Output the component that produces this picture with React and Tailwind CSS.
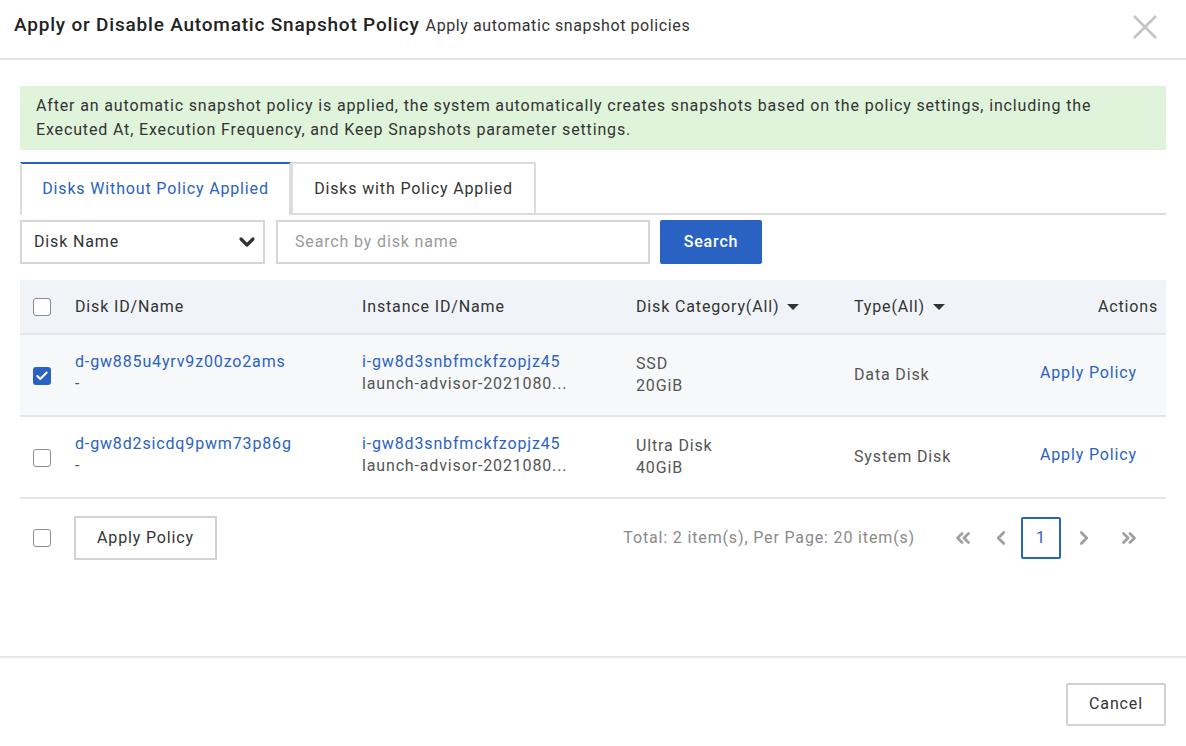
import { Check, ChevronDown, ChevronLeft, ChevronRight, ChevronsLeft, ChevronsRight } from 'lucide-react'

const rows = [
  {
    id: 'd-gw885u4yrv9z00zo2ams',
    instance: 'i-gw8d3snbfmckfzopjz45',
    instanceName: 'launch-advisor-2021080...',
    category: 'SSD',
    size: '20GiB',
    type: 'Data Disk',
    checked: true,
  },
  {
    id: 'd-gw8d2sicdq9pwm73p86g',
    instance: 'i-gw8d3snbfmckfzopjz45',
    instanceName: 'launch-advisor-2021080...',
    category: 'Ultra Disk',
    size: '40GiB',
    type: 'System Disk',
    checked: false,
  },
]

const cols = 'grid grid-cols-[55px_287px_274px_218px_1fr_150px] items-center'

function Checkbox({ checked }) {
  if (checked) {
    return (
      <span className="flex h-[18px] w-[18px] items-center justify-center rounded-[3px] bg-[#2a62c3]">
        <Check size={14} strokeWidth={3.5} className="text-white" />
      </span>
    )
  }
  return <span className="block h-[18px] w-[18px] rounded-[3px] border-[1.5px] border-[#8c8c8c] bg-white" />
}

function Caret() {
  return (
    <svg width="12" height="6" viewBox="0 0 12 6" className="ml-2 inline-block">
      <path d="M0 0h12L6 6z" fill="#333" />
    </svg>
  )
}

export default function App() {
  return (
    <div className="flex h-[746px] w-[1186px] flex-col bg-white font-['Roboto',sans-serif] text-[16px] tracking-[0.85px] text-[#333]">
      {/* header */}
      <div className="flex h-[60px] shrink-0 items-center justify-between border-b-2 border-[#e5e5e5] pb-[7px] pl-[14px] pr-[29px]">
        <div className="flex items-baseline gap-[6px]">
          <span className="text-[19px] font-medium tracking-[0.8px] text-[#222]">Apply or Disable Automatic Snapshot Policy</span>
          <span className="text-[16px] tracking-[0.6px] text-[#333]">Apply automatic snapshot policies</span>
        </div>
        <svg width="24" height="24" viewBox="0 0 24 24" className="mt-[2px]">
          <path d="M1 1L23 23M23 1L1 23" stroke="#c4c4c4" strokeWidth="2.5" />
        </svg>
      </div>

      <div className="flex-1 px-[20px] pt-[26px]">
        {/* notice */}
        <div className="bg-[#dff4db] px-[16px] py-[8px] leading-[24px] text-[#333]">
          After an automatic snapshot policy is applied, the system automatically creates snapshots based on the policy
          settings, including the Executed At, Execution Frequency, and Keep Snapshots parameter settings.
        </div>

        {/* tabs */}
        <div className="mt-[12px] flex border-b-2 border-[#dcdcdc]">
          <div className="-mb-[2px] flex h-[53px] w-[271px] items-center justify-center border-x-2 border-t-2 border-[#dcdcdc] border-t-[#2a62c3] bg-white pb-[2px] text-[#2a62c3]">
            Disks Without Policy Applied
          </div>
          <div className="flex h-[51px] w-[245px] items-center justify-center border-2 border-b-0 border-[#dcdcdc] text-[#333]">
            Disks with Policy Applied
          </div>
        </div>

        {/* filter */}
        <div className="mt-[5px] flex items-center">
          <div className="flex h-[44px] w-[245px] items-center justify-between border-2 border-[#d6d6d6] pl-[12px] pr-[4px]">
            <span>Disk Name</span>
            <ChevronDown size={24} strokeWidth={3.2} className="text-[#333]" />
          </div>
          <div className="ml-[11px] flex h-[44px] w-[374px] items-center border-2 border-[#d6d6d6] px-[17px] text-[#9a9a9a]">
            Search by disk name
          </div>
          <button className="ml-[10px] h-[44px] w-[102px] rounded-[2px] bg-[#2a62c3] font-medium text-white">
            Search
          </button>
        </div>

        {/* table */}
        <div className="mt-[16px]">
          <div className={`${cols} h-[55px] border-b-2 border-[#e3e6ea] bg-[#f0f3f7]`}>
            <div className="pl-[13px]">
              <Checkbox />
            </div>
            <div>Disk ID/Name</div>
            <div>Instance ID/Name</div>
            <div className="flex items-center">
              Disk Category(All)
              <Caret />
            </div>
            <div className="flex items-center">
              Type(All)
              <Caret />
            </div>
            <div className="pr-[8px] text-right">Actions</div>
          </div>

          {rows.map((r) => (
            <div
              key={r.id}
              className={`${cols} h-[82px] border-b-2 border-[#e3e6ea] leading-[22px] ${r.checked ? 'bg-[#f7f8fa]' : 'bg-white'}`}
            >
              <div className="pl-[13px] pt-[2px]">
                <Checkbox checked={r.checked} />
              </div>
              <div className="-mt-[4px]">
                <div className="text-[#2a62c3]">{r.id}</div>
                <div className="text-[#555]">-</div>
              </div>
              <div className="-mt-[4px]">
                <div className="text-[#2a62c3]">{r.instance}</div>
                <div className="text-[#555]">{r.instanceName}</div>
              </div>
              <div>
                <div className="text-[#555]">{r.category}</div>
                <div className="text-[#555]">{r.size}</div>
              </div>
              <div className="text-[#555]">{r.type}</div>
              <div className="-mt-[4px] pl-[24px] text-[#2a62c3]">Apply Policy</div>
            </div>
          ))}

          {/* footer */}
          <div className="mt-[17px] flex h-[44px] items-center">
            <div className="pl-[13px]">
              <Checkbox />
            </div>
            <button className="ml-[23px] h-[44px] w-[143px] border-2 border-[#cfd2d6] bg-white text-[#333]">
              Apply Policy
            </button>
            <div className="ml-auto flex items-center">
              <span className="text-[#8a8a8a]">Total: 2 item(s), Per Page: 20 item(s)</span>
              <ChevronsLeft size={22} strokeWidth={3} className="ml-[37px] shrink-0 text-[#a0a0a0]" />
              <ChevronLeft size={22} strokeWidth={3} className="ml-[16px] shrink-0 text-[#a0a0a0]" />
              <span className="ml-[9px] flex h-[42px] w-[40px] items-center justify-center rounded-[2px] border-2 border-[#2a62c3] text-[#2a62c3]">
                1
              </span>
              <ChevronRight size={22} strokeWidth={3} className="ml-[12px] shrink-0 text-[#a0a0a0]" />
              <ChevronsRight size={22} strokeWidth={3} className="ml-[23px] mr-[26px] shrink-0 text-[#a0a0a0]" />
            </div>
          </div>
        </div>
      </div>

      {/* bottom */}
      <div className="flex h-[90px] shrink-0 items-center justify-end border-t-2 border-[#e5e5e5] pr-[20px] pt-[4px]">
        <button className="h-[43px] w-[100px] rounded-[2px] border-2 border-[#cfd2d6] bg-white text-[#333]">Cancel</button>
      </div>
    </div>
  )
}
